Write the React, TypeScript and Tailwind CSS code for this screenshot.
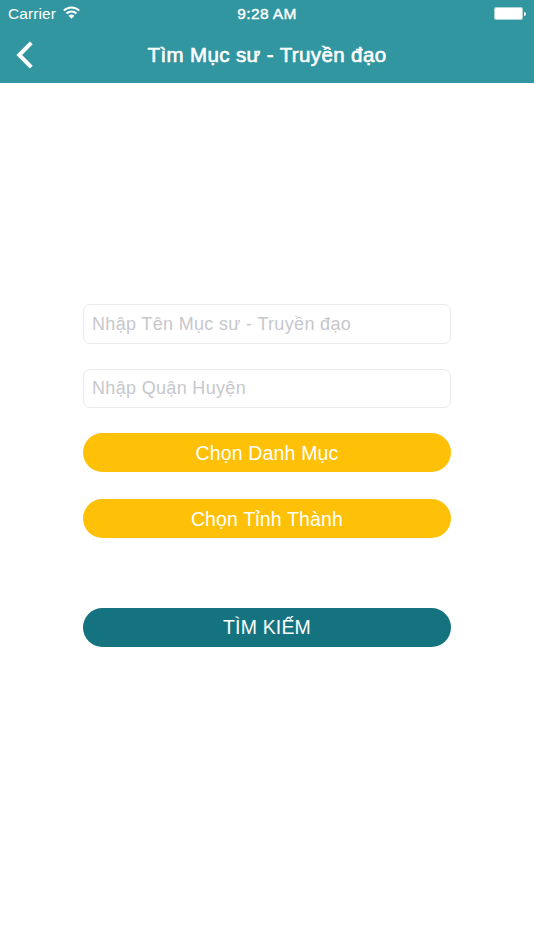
import { useState } from "react"

type FieldProps = {
  placeholder: string;
  value: string;
  className: string;
  onChange: (value: string) => void;
}

type PillButtonProps = {
  label: string;
  className: string;
}

const StatusBar = () => {
  return (
    <div className="grid h-7 grid-cols-3 items-center px-2 leading-7">
      <div className="flex items-center gap-[7px]">
        <span className="text-[15.5px] tracking-[0.1px]">Carrier</span>
        <svg className="mb-[3px] h-[13px] w-[17px]" viewBox="0 0 16 12" fill="none" stroke="currentColor" strokeWidth="1.8">
          <path d="M0.7 4.3C4.8 0.2 11.2 0.2 15.3 4.3" />
          <path d="M3.3 7C6 4.4 10 4.4 12.7 7" />
          <path d="M8 11.8L5.2 9C6.9 7.5 9.1 7.5 10.8 9Z" fill="currentColor" stroke="none" />
        </svg>
      </div>
      <span className="text-center text-[15.5px] tracking-[0.35px] [-webkit-text-stroke:0.4px_white]">9:28 AM</span>
      <div className="flex items-center justify-end gap-px pb-px">
        <div className="h-[13px] w-[29px] rounded-[2px] border border-white/60 bg-white bg-clip-padding" />
        <div className="h-1 w-[2px] rounded-r-full bg-white" />
      </div>
    </div>
  )
}

const Navbar = () => {
  return (
    <nav className="relative flex h-[55px] items-start justify-center">
      <button aria-label="Back" className="absolute left-4 top-[13px]">
        <svg className="h-7 w-[17px]" viewBox="0 0 17 28" fill="none" stroke="currentColor" strokeWidth="4">
          <path d="M15.3 1.8L3.2 14L15.3 26.2" />
        </svg>
      </button>
      <h1 className="text-[20.5px] leading-[53px] tracking-[0.38px] [-webkit-text-stroke:0.6px_white]">Tìm Mục sư - Truyền đạo</h1>
    </nav>
  )
}

const Field = ({ placeholder, value, className, onChange }: FieldProps) => {
  return (
    <input
      type="text"
      placeholder={placeholder}
      value={value}
      onChange={(e) => onChange(e.target.value)}
      className={`block w-full rounded-[7px] border border-[#ebebeb] bg-white px-2 text-[18px] tracking-[0.33px] text-gray-800 placeholder:text-[#c7c7cc] outline-none ${className}`}
    />
  )
}

const PillButton = ({ label, className }: PillButtonProps) => {
  return (
    <button className={`flex h-[39px] w-full items-center justify-center rounded-full text-[19.5px] tracking-[0.15px] text-white ${className}`}>
      {label}
    </button>
  )
}

const App = () => {
  const [name, setName] = useState<string>("")
  const [district, setDistrict] = useState<string>("")

  return (
    <div className="min-h-screen bg-white font-['Liberation_Sans',Arial,sans-serif]">
      <header className="bg-[#3296a0] text-white">
        <StatusBar />
        <Navbar />
      </header>

      <main className="mx-auto w-[368px] pt-[221px]">
        <Field placeholder="Nhập Tên Mục sư - Truyền đạo" value={name} className="h-10" onChange={setName} />
        <Field placeholder="Nhập Quận Huyện" value={district} className="mt-[25px] h-[39px]" onChange={setDistrict} />
        <PillButton label="Chọn Danh Mục" className="mt-[25px] bg-[#ffc107] pt-0.5" />
        <PillButton label="Chọn Tỉnh Thành" className="mt-[27px] bg-[#ffc107] pt-0.5" />
        <PillButton label="TÌM KIẾM" className="mt-[70px] bg-[#14737f]" />
      </main>
    </div>
  )
}

export default App
